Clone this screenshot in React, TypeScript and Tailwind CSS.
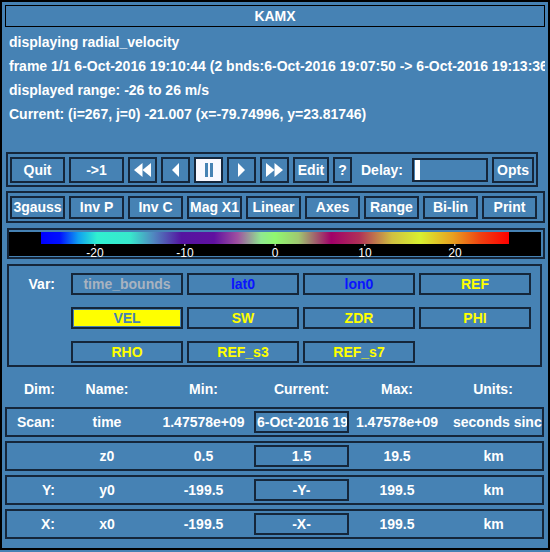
import React from 'react';

const dark = 'border-[#15263a]';

const Btn: React.FC<{ w: string; h: string; children: React.ReactNode; className?: string }> = ({ w, h, children, className }) => (
  <div className={`${w} ${h} shrink-0 border-2 ${dark} flex items-center justify-center ${className ?? ''}`}>{children}</div>
);

const Tri: React.FC<{ dir: 'l' | 'r'; double?: boolean }> = ({ dir, double }) => {
  const w = double ? 17 : 7;
  const pts =
    dir === 'l'
      ? double
        ? ['8.5,0 0,7 8.5,14', '17,0 8.5,7 17,14']
        : ['7,0 0,7 7,14']
      : double
      ? ['0,0 8.5,7 0,14', '8.5,0 17,7 8.5,14']
      : ['0,0 7,7 0,14'];
  return (
    <svg width={w} height={14} viewBox={`0 0 ${w} 14`}>
      {pts.map((p) => (
        <polygon key={p} points={p} fill="#ffffff" />
      ))}
    </svg>
  );
};

const vars = [
  { t: 'time_bounds', c: 'text-[#a9b3c0]' },
  { t: 'lat0', c: 'text-[#0a14ff]' },
  { t: 'lon0', c: 'text-[#0a14ff]' },
  { t: 'REF', c: 'text-[#ffff00]' },
  { t: 'VEL', c: 'text-[#4682b4]', sel: true },
  { t: 'SW', c: 'text-[#ffff00]' },
  { t: 'ZDR', c: 'text-[#ffff00]' },
  { t: 'PHI', c: 'text-[#ffff00]' },
  { t: 'RHO', c: 'text-[#ffff00]' },
  { t: 'REF_s3', c: 'text-[#ffff00]' },
  { t: 'REF_s7', c: 'text-[#ffff00]' },
];

const dims = [
  { dim: 'Scan:', name: 'time', min: '1.47578e+09', cur: '6-Oct-2016 19:10:44', max: '1.47578e+09', units: 'seconds since 1970-01-01', scan: true },
  { dim: '', name: 'z0', min: '0.5', cur: '1.5', max: '19.5', units: 'km' },
  { dim: 'Y:', name: 'y0', min: '-199.5', cur: '-Y-', max: '199.5', units: 'km' },
  { dim: 'X:', name: 'x0', min: '-199.5', cur: '-X-', max: '199.5', units: 'km' },
];

const ticks = [-20, -10, 0, 10, 20];

export default function App() {
  return (
    <div className="w-[550px] h-[552px] bg-[#4682b4] overflow-hidden" style={{ fontFamily: '"Liberation Sans", Arial, sans-serif' }}>
      <div className="h-[550px] border-2 border-black px-[3px] pt-[3px] flex flex-col text-white font-bold text-[14px] overflow-hidden">
        {/* title */}
        <div className="h-[22px] border border-black flex items-center justify-center leading-none">KAMX</div>

        {/* info lines */}
        <div className="mt-[3px] pl-[4px] leading-[24px] whitespace-nowrap overflow-hidden">
          <div>displaying radial_velocity</div>
          <div>frame 1/1 6-Oct-2016 19:10:44 (2 bnds:6-Oct-2016 19:07:50 -&gt; 6-Oct-2016 19:13:36)</div>
          <div>displayed range: -26 to 26 m/s</div>
          <div>Current: (i=267, j=0) -21.007 (x=-79.74996, y=23.81746)</div>
        </div>

        {/* transport row */}
        <div className={`mt-[26px] ml-[1px] w-fit border-2 ${dark} pt-[3px] pb-[2px] px-[2px] flex gap-[4px]`}>
          <Btn w="w-[55px]" h="h-[26px]">Quit</Btn>
          <Btn w="w-[55px]" h="h-[26px]">-&gt;1</Btn>
          <Btn w="w-[29px]" h="h-[26px]"><Tri dir="l" double /></Btn>
          <Btn w="w-[29px]" h="h-[26px]"><Tri dir="l" /></Btn>
          <Btn w="w-[29px]" h="h-[26px]" className="bg-[#f8f8ff] gap-[2px]">
            <div className="w-[3px] h-[14px] bg-[#4682b4]" />
            <div className="w-[3px] h-[14px] bg-[#4682b4]" />
          </Btn>
          <Btn w="w-[29px]" h="h-[26px]"><Tri dir="r" /></Btn>
          <Btn w="w-[29px]" h="h-[26px]"><Tri dir="r" double /></Btn>
          <Btn w="w-[36px]" h="h-[26px]">Edit</Btn>
          <Btn w="w-[19px]" h="h-[26px]">?</Btn>
          <div className="w-[52px] h-[26px] flex items-center justify-center">Delay:</div>
          <div className={`w-[76px] h-[24px] mt-[1px] border-2 ${dark} flex items-center pl-[1px]`}>
            <div className="w-[5px] h-[20px] bg-white" />
          </div>
          <Btn w="w-[42px]" h="h-[26px]">Opts</Btn>
        </div>

        {/* options row */}
        <div className={`mt-[4px] ml-[1px] border-2 ${dark} pt-[3px] pb-[2px] px-[2px] flex gap-[4px]`}>
          {['3gauss', 'Inv P', 'Inv C', 'Mag X1', 'Linear', 'Axes', 'Range', 'Bi-lin', 'Print'].map((t) => (
            <Btn key={t} w="w-[55px]" h="h-[23px]">{t}</Btn>
          ))}
        </div>

        {/* color bar */}
        <div className={`mt-[5px] ml-[2px] border-2 ${dark} pt-[2px] pb-[1px] pr-[2px]`}>
          <div className="h-[24px] bg-black flex flex-col">
            <div className="h-[12px] ml-[32px] w-[468px] bg-[linear-gradient(to_right,#0000ff_0%,#0010ff_4%,#10a0f0_8%,#30f0d0_12%,#38e8cc_19%,#5088c0_24%,#5414a0_30%,#6010a0_37%,#a050a0_42%,#90e890_47%,#90f870_50%,#a0c870_55%,#a00068_62%,#b03058_68%,#d0c040_75%,#d8f030_81%,#e8a020_88%,#f04010_94%,#ff0000_100%)]" />
            <div className="relative h-[12px] ml-[32px] w-[468px] font-normal text-[12px] leading-none">
              {ticks.map((v) => (
                <div key={v} className="absolute top-0 flex flex-col items-center" style={{ left: `${((v + 26) / 52) * 100}%`, transform: 'translateX(-50%)' }}>
                  <div className="w-px h-[2px] bg-white" />
                  <div className="mt-[1px]">{v}</div>
                </div>
              ))}
            </div>
          </div>
        </div>

        {/* var panel */}
        <div className={`mt-[5px] ml-[2px] mr-[3px] border-2 ${dark} pt-[7px] pb-[2px] flex`}>
          <div className="w-[46px] h-[22px] flex items-center justify-end">Var:</div>
          <div className="ml-[16px] grid grid-cols-[repeat(4,112px)] gap-x-[4px] gap-y-[12px]">
            {vars.map((v) => (
              <div key={v.t} className={`h-[22px] border-2 ${dark} ${v.sel ? 'p-[1px]' : ''}`}>
                <div className={`h-full flex items-center justify-center ${v.c} ${v.sel ? 'bg-[#ffff00]' : ''}`}>{v.t}</div>
              </div>
            ))}
          </div>
        </div>

        {/* dims header */}
        <div className="mt-[12px] h-[20px] border-x-2 border-transparent flex items-center">
          <div className="w-[48px] text-right">Dim:</div>
          <div className="w-[104px] text-center">Name:</div>
          <div className="w-[89px] text-center">Min:</div>
          <div className="w-[6px]" />
          <div className="w-[95px] text-center">Current:</div>
          <div className="w-[96px] text-center">Max:</div>
          <div className="w-[96px] text-center">Units:</div>
        </div>

        {/* dims rows */}
        <div className="mt-[8px] mr-[1px] flex flex-col gap-[4px]">
          {dims.map((d) => (
            <div key={d.name} className={`h-[30px] border-2 ${dark} flex items-center whitespace-nowrap`}>
              <div className="w-[48px] text-right">{d.dim}</div>
              <div className="w-[104px] text-center">{d.name}</div>
              <div className="w-[89px] text-center">{d.min}</div>
              <div className="w-[6px]" />
              <div className={`w-[95px] h-[22px] border-2 ${dark} flex items-center overflow-hidden ${d.scan ? 'pl-[1px]' : 'justify-center'}`}>
                {d.cur}
              </div>
              <div className="w-[96px] text-center">{d.max}</div>
              <div className={`flex-1 overflow-hidden ${d.scan ? 'pl-[8px]' : 'text-center'}`}>{d.units}</div>
            </div>
          ))}
        </div>
      </div>
    </div>
  );
}
